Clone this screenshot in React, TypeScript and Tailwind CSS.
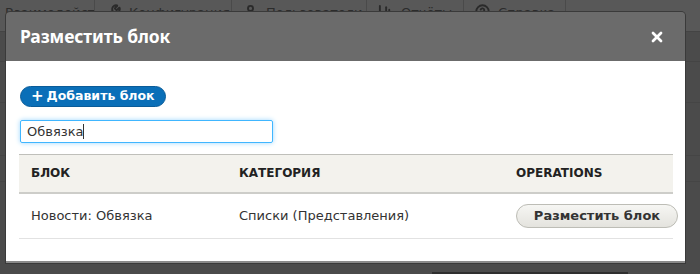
import { Wrench, User, BarChart3, HelpCircle, X } from 'lucide-react';

const tabs = [
  { label: 'Взаимодействие', icon: null, w: 95 },
  { label: 'Конфигурация', icon: Wrench, w: 137 },
  { label: 'Пользователи', icon: User, w: 135 },
  { label: 'Отчёты', icon: BarChart3, w: 97 },
  { label: 'Справка', icon: HelpCircle, w: 102 },
];

function Toolbar() {
  return (
    <div className="flex h-[32px] bg-[#585858] border-b border-[#444]">
      {tabs.map((t, i) => {
        const Icon = t.icon;
        return (
          <div
            key={i}
            style={{ width: t.w }}
            className="flex items-start gap-2 pt-[3px] pl-[5px] border-r border-[#4a4a4a] text-[13px] text-[#2c2c2c] overflow-hidden whitespace-nowrap"
          >
            {Icon && <Icon className="w-[15px] h-[15px] mt-[1px] text-[#2a2a2a] ml-[6px]" strokeWidth={3} />}
            <span>{t.label}</span>
          </div>
        );
      })}
    </div>
  );
}

function Background() {
  return (
    <div className="flex flex-col">
      <Toolbar />
      <div className="h-[30px] border-b border-[#444]" />
      <div className="h-[41px] border-b border-[#454545]" />
      <div className="h-[53px] border-b border-[#454545]" />
      <div className="h-[26px] border-b border-[#454545]" />
    </div>
  );
}

export default function App() {
  return (
    <div
      className="relative w-[700px] h-[274px] overflow-hidden bg-[#4b4b4b]"
      style={{ fontFamily: '"DejaVu Sans", Verdana, sans-serif' }}
    >
      <Background />
      <div className="absolute left-[432px] top-[272px] w-[196px] h-[4px] bg-[#2e2e2e]" />

      {/* dialog */}
      <div className="absolute left-[6px] top-[12px] w-[679px] rounded-t-[4px] shadow-[0_0_0_1px_#3a3a3a] overflow-hidden">
        <div className="flex items-center justify-between h-[49px] bg-[#6b6b6b] pl-[14px] pr-[20px]">
          <h2
            className="text-white text-[17.5px] font-bold tracking-[-0.1px]"
            style={{ fontFamily: '"Noto Sans", "Open Sans", sans-serif' }}
          >
            Разместить блок
          </h2>
          <X className="w-[16px] h-[16px] text-white" strokeWidth={4} />
        </div>

        <div className="bg-white pt-[25px] pb-[22px] pl-[13px] pr-[12px] border-b-2 border-[#8a8a8a]">
          <button className="ml-[1px] flex items-center h-[21px] px-[10px] rounded-full bg-[#0a6fb8] text-white text-[12.5px] font-bold border border-[#0a5c99]">
            <span className="mr-[3px] text-[15px] leading-none">+</span>Добавить блок
          </button>

          <div className="mt-[13px] ml-[1px] flex items-center w-[253px] h-[23px] border border-[#40b6ff] rounded-[2px] shadow-[0_0_5px_#9cd6ff] px-[6px] text-[13px] text-[#333]">
            Обвязка<span className="w-px h-[15px] bg-[#333]" />
          </div>

          <table className="mt-[11px] w-[654px] table-fixed border-collapse text-left">
            <thead>
              <tr className="bg-[#f3f2ed] border-t border-[#bfbfba] border-b-2 border-b-[#cdcdc9]">
                <th className="w-[208px] h-[38px] pl-[12px] text-[12px] font-bold text-[#222]">БЛОК</th>
                <th className="w-[277px] pl-[12px] text-[12px] font-bold text-[#222]">КАТЕГОРИЯ</th>
                <th className="pl-[12px] text-[12px] font-bold text-[#222]">OPERATIONS</th>
              </tr>
            </thead>
            <tbody>
              <tr className="border-b border-[#e2e2e2]">
                <td className="h-[46px] pl-[12px] text-[13px] text-[#333]">Новости: Обвязка</td>
                <td className="pl-[12px] text-[13px] text-[#333]">Списки (Представления)</td>
                <td className="pl-[12px]">
                  <button className="flex items-center justify-center w-[162px] h-[24px] rounded-full border border-[#bdbdb6] bg-gradient-to-b from-[#f6f6f3] to-[#e4e3de] text-[13px] font-bold text-[#333]">
                    Разместить блок
                  </button>
                </td>
              </tr>
            </tbody>
          </table>
        </div>
      </div>
    </div>
  );
}
